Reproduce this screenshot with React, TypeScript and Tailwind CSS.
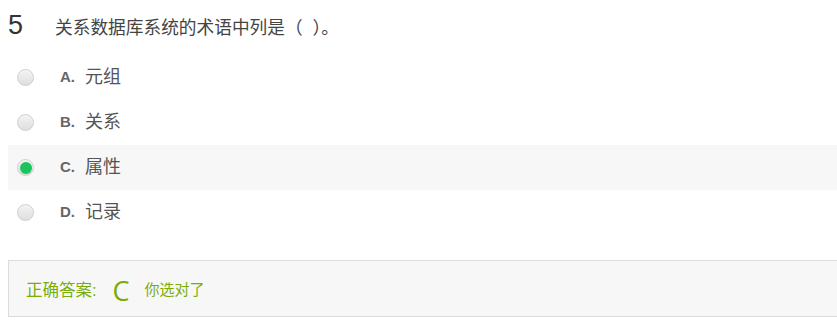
const options = [
  { key: "A", text: "元组" },
  { key: "B", text: "关系" },
  { key: "C", text: "属性" },
  { key: "D", text: "记录" },
];

const selected = "C";

const Radio = ({ checked }: { checked: boolean }) => (
  <span className="flex h-[17px] w-[17px] items-center justify-center rounded-full border border-[#cfcfcf] bg-gradient-to-b from-[#f4f4f4] to-[#dedede]">
    {checked && <span className="h-[12px] w-[12px] rounded-full bg-[#1dc45c]" />}
  </span>
);

export default function App() {
  return (
    <div className="h-[324px] w-[837px] overflow-hidden bg-white font-['Liberation_Sans','Noto_Sans_CJK_SC',sans-serif] text-[#333]">
      {/* Question */}
      <div className="flex items-baseline pt-[10px] pl-[8px]">
        <span className="w-[47px] text-[27px] leading-[30px] text-[#333]">5</span>
        <span className="text-[17.7px] leading-[30px] text-[#444]">关系数据库系统的术语中列是（&nbsp;&nbsp;）。</span>
      </div>

      {/* Options */}
      <div className="mt-[12px] pl-[8px]">
        {options.map((o) => (
          <div
            key={o.key}
            className={`flex h-[45px] items-center ${o.key === selected ? "bg-[#f7f7f7]" : ""}`}
          >
            <span className="ml-[9px] w-[43px]">
              <Radio checked={o.key === selected} />
            </span>
            <span className="w-[25px] text-[15px] font-bold text-[#666]">{o.key}.</span>
            <span className="text-[18px] text-[#555]">{o.text}</span>
          </div>
        ))}
      </div>

      {/* Answer */}
      <div className="mt-[25px] pl-[8px]">
        <div className="flex h-[57px] items-center border border-r-0 border-[#dcdcdc] bg-[#f7f7f7] pl-[17px] pt-[3px] text-[#7aad0a]">
          <span className="text-[16.5px]">正确答案:</span>
          <span className="ml-[16px] font-['Open_Sans',sans-serif] text-[27px] font-normal leading-none">C</span>
          <span className="ml-[15px] text-[15px]">你选对了</span>
        </div>
      </div>
    </div>
  );
}
